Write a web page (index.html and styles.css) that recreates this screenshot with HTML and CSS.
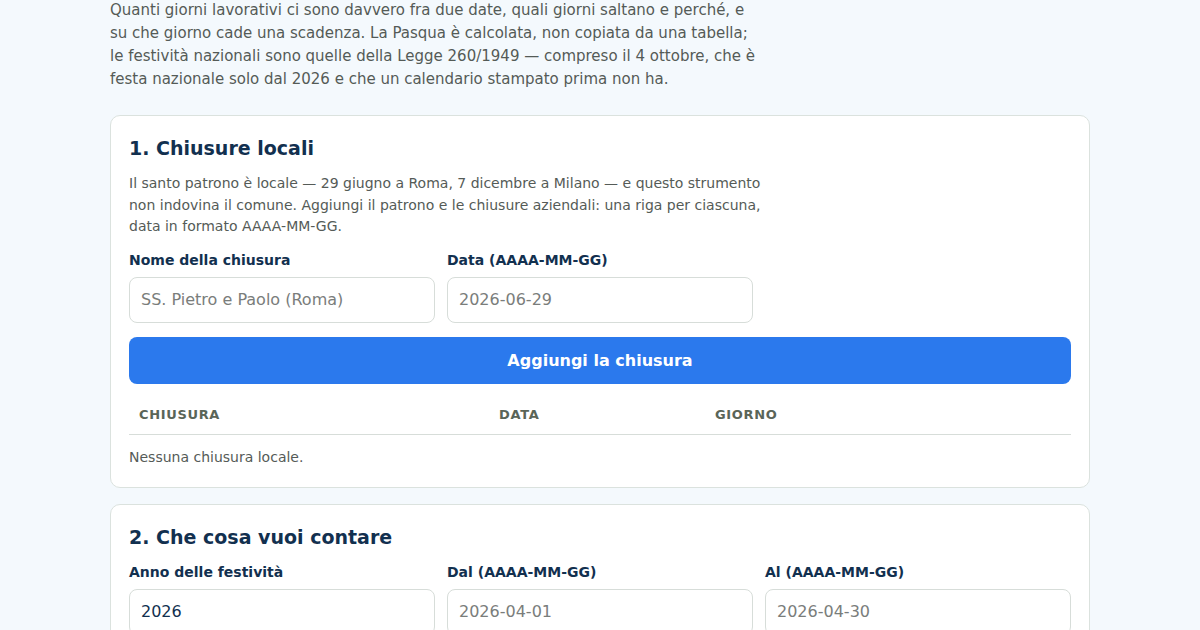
FILE: index.html
```html
<!DOCTYPE html>
<html lang="it">
<head>
  <meta charset="UTF-8">
  <meta name="viewport" content="width=device-width, initial-scale=1.0">
  <title>Giorni lavorativi fra due date</title>
  <link rel="stylesheet" href="styles.css">
</head>
<body>
  <main class="page">
    <p class="intro">Quanti giorni lavorativi ci sono davvero fra due date, quali giorni saltano e perché, e su che giorno cade una scadenza. La Pasqua è calcolata, non copiata da una tabella; le festività nazionali sono quelle della Legge 260/1949 — compreso il 4 ottobre, che è festa nazionale solo dal 2026 e che un calendario stampato prima non ha.</p>

    <section class="card">
      <h2 class="card-title">1. Chiusure locali</h2>
      <p class="card-text">Il santo patrono è locale — 29 giugno a Roma, 7 dicembre a Milano — e questo strumento non indovina il comune. Aggiungi il patrono e le chiusure aziendali: una riga per ciascuna, data in formato AAAA-MM-GG.</p>
      <div class="fields">
        <label class="field">
          <span class="field-label">Nome della chiusura</span>
          <input class="input" type="text" placeholder="SS. Pietro e Paolo (Roma)">
        </label>
        <label class="field">
          <span class="field-label">Data (AAAA-MM-GG)</span>
          <input class="input" type="text" placeholder="2026-06-29">
        </label>
      </div>
      <button class="add-button" type="button">Aggiungi la chiusura</button>
      <table class="closures">
        <thead>
          <tr>
            <th class="col-name">Chiusura</th>
            <th class="col-date">Data</th>
            <th class="col-day">Giorno</th>
          </tr>
        </thead>
      </table>
      <p class="empty">Nessuna chiusura locale.</p>
    </section>

    <section class="card">
      <h2 class="card-title">2. Che cosa vuoi contare</h2>
      <div class="fields">
        <label class="field">
          <span class="field-label">Anno delle festività</span>
          <input class="input" type="text" value="2026">
        </label>
        <label class="field">
          <span class="field-label">Dal (AAAA-MM-GG)</span>
          <input class="input" type="text" placeholder="2026-04-01">
        </label>
        <label class="field">
          <span class="field-label">Al (AAAA-MM-GG)</span>
          <input class="input" type="text" placeholder="2026-04-30">
        </label>
      </div>
    </section>
  </main>
</body>
</html>
```

FILE: styles.css
```css
body {
  font-family: "DejaVu Sans", Verdana, sans-serif;
  margin: 0;
  background-color: #f4f9fd;
  color: #1f2a33;
}

.page {
  width: 980px;
  margin: -1px auto 0;
}

.intro {
  max-width: 650px;
  margin: 0 0 24px;
  font-size: 15px;
  line-height: 23px;
  color: #545b57;
}

.card {
  background-color: #fff;
  border: 1px solid #dbe2de;
  border-radius: 10px;
  padding: 19px 18px;
  margin-bottom: 16px;
}

.card-title {
  margin: 0 0 12px;
  font-size: 19px;
  line-height: 26px;
  color: #12304f;
}

.card-text {
  max-width: 640px;
  margin: 0 0 12px;
  font-size: 14px;
  line-height: 21.6px;
  color: #555b57;
}

.fields {
  display: grid;
  grid-template-columns: repeat(3, 1fr);
  gap: 12px;
}

.field {
  display: flex;
  flex-direction: column;
  gap: 7px;
}

.field-label {
  font-size: 14px;
  line-height: 20px;
  font-weight: bold;
  color: #12304f;
}

.input {
  font-family: inherit;
  font-size: 16px;
  line-height: 20px;
  padding: 12px 11px;
  border: 1px solid #d7ddd9;
  border-radius: 8px;
  color: #12304f;
  background-color: #fff;
}

.input::placeholder {
  color: #7a7d7b;
}

.add-button {
  display: block;
  width: 100%;
  margin-top: 14px;
  padding: 14px;
  font-family: inherit;
  font-size: 16px;
  line-height: 19px;
  font-weight: bold;
  color: #fff;
  background-color: #2b79ed;
  border: none;
  border-radius: 8px;
  cursor: pointer;
}

.closures {
  width: 100%;
  margin-top: 11px;
  border-collapse: collapse;
}

.closures th {
  padding: 10px;
  font-size: 13px;
  line-height: 19px;
  text-align: left;
  text-transform: uppercase;
  letter-spacing: 0.05em;
  color: #5a6558;
  border-bottom: 1px solid #d7ddd9;
}

.col-name {
  width: 340px;
}

.col-date {
  width: 196px;
}

.empty {
  margin: 12px 0 0;
  font-size: 14px;
  line-height: 21px;
  color: #555b57;
}
```
